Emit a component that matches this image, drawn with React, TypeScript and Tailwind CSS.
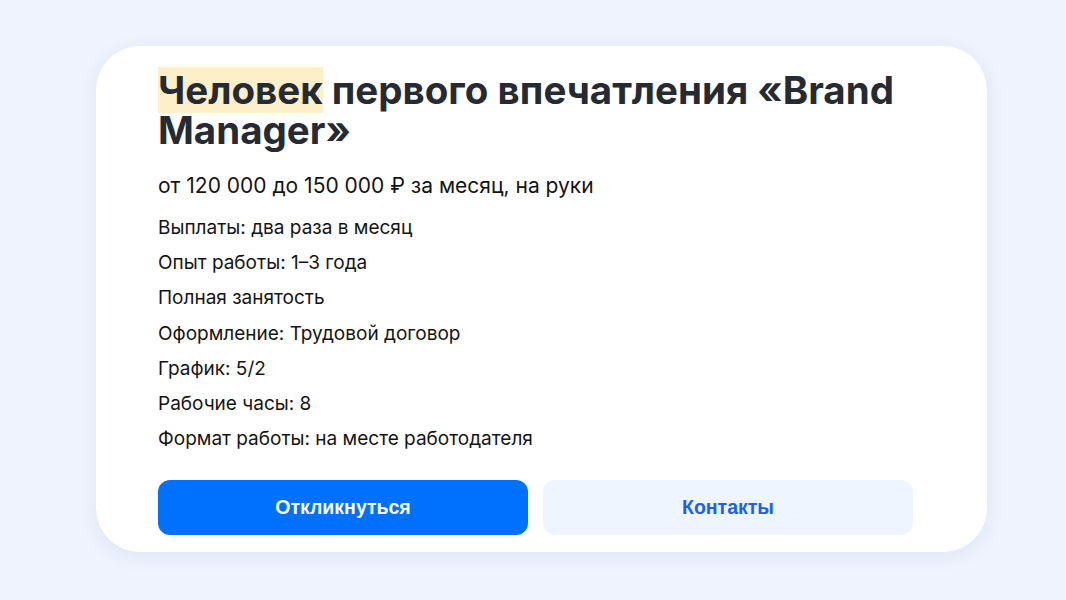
export default function App() {
  const items = [
    "Выплаты: два раза в месяц",
    "Опыт работы: 1–3 года",
    "Полная занятость",
    "Оформление: Трудовой договор",
    "График: 5/2",
    "Рабочие часы: 8",
    "Формат работы: на месте работодателя",
  ];

  return (
    <div
      className="min-h-[600px] w-full bg-[#eef3fd] pt-[46px] pl-[96px]"
      style={{ fontFamily: 'Inter, "Liberation Sans", Arial, sans-serif' }}
    >
      <div className="h-[506px] w-[891px] rounded-[44px] bg-white pl-[62px] pt-[24px] shadow-[0_4px_20px_rgba(40,70,140,0.08)]">
        <div className="w-[755px]">
          <h1 className="text-[38.5px] font-bold leading-[40px] text-[#262b33]">
            <span className="bg-[#fdf0c8]">Человек</span> первого впечатления «Brand Manager»
          </h1>
          <div className="mt-[22px] text-[21px] leading-[28px] text-[#141414]">
            от 120 000 до 150 000 ₽ за месяц, на руки
          </div>
          <div className="mt-[10px] flex flex-col">
            {items.map((t) => (
              <div key={t} className="text-[19px] leading-[35.2px] text-[#141414]">
                {t}
              </div>
            ))}
          </div>
          <div className="mt-[24px] flex gap-[15px]">
            <button
              className="h-[55px] flex-1 rounded-[12px] bg-[#0070ff] text-[19.5px] font-bold text-white"
              style={{ fontFamily: '"Liberation Sans", Arial, sans-serif' }}
            >
              Откликнуться
            </button>
            <button
              className="h-[55px] flex-1 rounded-[12px] bg-[#eef5ff] text-[19.5px] font-bold text-[#1a62e8]"
              style={{ fontFamily: '"Liberation Sans", Arial, sans-serif' }}
            >
              Контакты
            </button>
          </div>
        </div>
      </div>
    </div>
  );
}
